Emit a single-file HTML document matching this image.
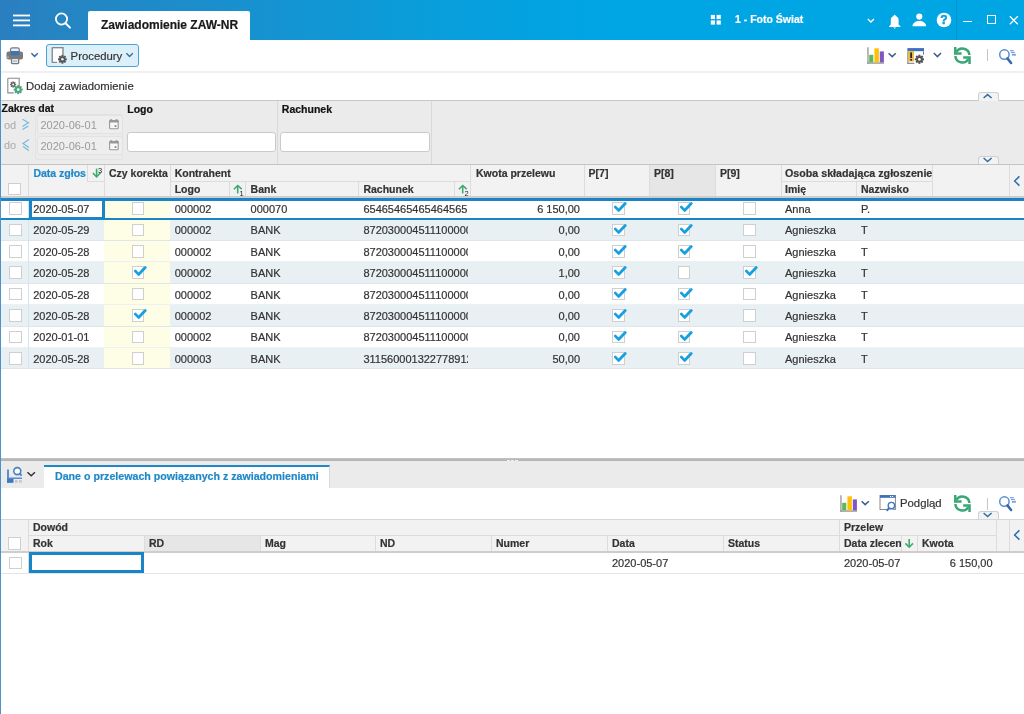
<!DOCTYPE html><html><head><meta charset="utf-8"><style>
html,body{margin:0;padding:0;width:1024px;height:714px;overflow:hidden;background:#fff;}
body{position:relative;font-family:"Liberation Sans",sans-serif;-webkit-font-smoothing:antialiased;}
div{position:absolute;box-sizing:border-box;}
.t{white-space:nowrap;-webkit-text-stroke:0.2px currentColor;}
#root{position:absolute;left:0;top:0;width:1024px;height:714px;overflow:hidden;will-change:transform;}
</style></head><body><div id="root">
<div style="left:0px;top:0px;width:1024px;height:40px;background:linear-gradient(to right,#2A7FC0 0px,#2783C1 44px,#1B8ECC 200px,#0B9CD9 400px,#00A5E4 600px,#00A5E4 1024px);"></div>
<svg style="position:absolute;left:12px;top:13px;" width="20" height="15" viewBox="0 0 20 15"><rect x="1" y="1.6" width="17" height="1.8" fill="#fff"/><rect x="1" y="6.5" width="17" height="1.8" fill="#fff"/><rect x="1" y="11.5" width="17" height="1.8" fill="#fff"/></svg>
<svg style="position:absolute;left:52px;top:10px;" width="22" height="22" viewBox="0 0 22 22"><circle cx="9.5" cy="9" r="5.6" fill="none" stroke="#fff" stroke-width="1.8"/><line x1="13.6" y1="13.2" x2="18" y2="17.6" stroke="#fff" stroke-width="2" stroke-linecap="round"/></svg>
<div style="left:88px;top:11px;width:162px;height:29px;background:#fff;border-radius:2px 2px 0 0;"></div>
<div class="t" style="left:101px;top:19px;font-size:12px;line-height:12px;font-weight:bold;color:#1a1a1a;">Zawiadomienie ZAW-NR</div>
<svg style="position:absolute;left:710px;top:14px;" width="13" height="12" viewBox="0 0 13 12"><rect x="0.8" y="0.9" width="4.2" height="4.2" fill="#fff"/><rect x="6.6" y="0.9" width="4.2" height="4.2" fill="#fff"/><rect x="0.8" y="6.4" width="4.2" height="4.2" fill="#fff"/><rect x="6.6" y="6.4" width="4.2" height="4.2" fill="#fff"/></svg>
<div class="t" style="left:735px;top:14px;font-size:10.5px;line-height:10.5px;font-weight:bold;color:#fff;">1 - Foto Świat</div>
<svg style="position:absolute;left:866px;top:17px;" width="10" height="8" viewBox="0 0 10 8"><polyline points="1.8,2 4.9,5 8,2" fill="none" stroke="#fff" stroke-width="1.4"/></svg>
<svg style="position:absolute;left:887px;top:13px;" width="16" height="17" viewBox="0 0 16 17"><path d="M7.7 1.6C8.3 2.4 8.9 2.8 9.3 3.2C10.9 3.9 11.6 5.2 11.6 6.8V11.6L13.5 13.4V13.9H1.9V13.4L3.8 11.6V6.8C3.8 5.2 4.5 3.9 6.1 3.2C6.5 2.8 7.1 2.4 7.7 1.6Z" fill="#fff"/><path d="M6.2 14.5H9.2L7.7 15.8Z" fill="#fff"/></svg>
<svg style="position:absolute;left:911px;top:12px;" width="17" height="16" viewBox="0 0 17 16"><circle cx="8.3" cy="4.6" r="3.1" fill="#fff"/><path d="M1.5 14.3c0-3.3 3-5.3 6.8-5.3s6.8 2 6.8 5.3z" fill="#fff"/></svg>
<svg style="position:absolute;left:935px;top:11px;" width="18" height="18" viewBox="0 0 18 18"><circle cx="9" cy="9" r="7.3" fill="#fff"/><text x="9" y="13.3" font-family="Liberation Sans" font-weight="bold" font-size="12" text-anchor="middle" fill="#06A0DE" stroke="#06A0DE" stroke-width="0.5">?</text></svg>
<div style="left:956px;top:0px;width:1px;height:40px;background:#0790C9;"></div>
<div style="left:963px;top:21.2px;width:8.6px;height:1.2px;background:#fff;"></div>
<div style="left:987px;top:15px;width:8.5px;height:8.5px;border:1.3px solid #fff;"></div>
<svg style="position:absolute;left:1008px;top:14px;" width="12" height="12" viewBox="0 0 12 12"><path d="M1.8 2.2L9.8 10.2M9.8 2.2L1.8 10.2" stroke="#fff" stroke-width="1.3"/></svg>
<div style="left:0px;top:40px;width:1px;height:674px;background:#4A92C9;"></div>
<svg style="position:absolute;left:5px;top:46px;" width="20" height="19" viewBox="0 0 20 19"><rect x="1.5" y="5.4" width="16.5" height="8.2" rx="2" fill="#7a7a7a"/>
<rect x="5.5" y="1.8" width="8.8" height="7.6" rx="1.8" fill="#e9eef5" stroke="#7a7a7a" stroke-width="1.2"/>
<rect x="5.6" y="5" width="8.6" height="4.2" fill="#3E73B9"/>
<rect x="2.4" y="10.6" width="1.2" height="1.2" fill="#ddd"/>
<rect x="6.5" y="12.4" width="7.2" height="5.2" rx="0.8" fill="#e3eaf4" stroke="#7a7a7a" stroke-width="1.3"/>
<rect x="8" y="14.2" width="4.2" height="1.6" fill="#a9c0e0"/></svg>
<svg style="position:absolute;left:30px;top:51px;" width="10" height="8" viewBox="0 0 10 8"><polyline points="1.4,2.2 4.6,5.4 7.8,2.2" fill="none" stroke="#3B6BA5" stroke-width="1.5"/></svg>
<div style="left:46px;top:44px;width:93px;height:23px;background:#DCF0FA;border:1px solid #4AA3D5;border-radius:3px;"></div>
<svg style="position:absolute;left:50px;top:46px;" width="20" height="20" viewBox="0 0 20 20"><path d="M2.3 1.6h10.6v8.2M7 16.4H2.3V1.6" fill="none" stroke="#888" stroke-width="1.1"/>
<rect x="2.3" y="1.6" width="10.6" height="14.8" fill="#fff" opacity="0"/></svg>
<svg style="position:absolute;left:52px;top:48px" width="11" height="14"><rect x="0.6" y="0.4" width="10" height="13.6" fill="#fff"/></svg>
<svg style="position:absolute;left:50px;top:46px;" width="20" height="20" viewBox="0 0 20 20"><path d="M2.3 1.6h10.6v8.2M7 16.4H2.3V1.6" fill="none" stroke="#8a8a8a" stroke-width="1.1"/></svg>
<svg style="position:absolute;left:55px;top:52px;" width="15" height="15" viewBox="0 0 15 15"><g transform="translate(7.4,7.3)"><path d="" /><circle r="3.168" fill="#555"/><rect x="-0.9680000000000001" y="-4.4" width="1.9360000000000002" height="8.8" fill="#555" transform="rotate(0)"/><rect x="-0.9680000000000001" y="-4.4" width="1.9360000000000002" height="8.8" fill="#555" transform="rotate(45)"/><rect x="-0.9680000000000001" y="-4.4" width="1.9360000000000002" height="8.8" fill="#555" transform="rotate(90)"/><rect x="-0.9680000000000001" y="-4.4" width="1.9360000000000002" height="8.8" fill="#555" transform="rotate(135)"/><circle r="1.32" fill="#DCF0FA"/></g></svg>
<div class="t" style="left:70.6px;top:51px;font-size:11.33px;line-height:11.33px;font-weight:normal;color:#333;">Procedury</div>
<svg style="position:absolute;left:125px;top:51px;" width="10" height="8" viewBox="0 0 10 8"><polyline points="1.4,2.2 4.6,5.4 7.8,2.2" fill="none" stroke="#3B6BA5" stroke-width="1.4"/></svg>
<svg style="position:absolute;left:867px;top:47px;" width="18" height="17" viewBox="0 0 18 17"><rect x="0.2" y="0.3" width="1.5" height="16.4" fill="#A3A3A3"/><rect x="0.2" y="15.4" width="16.9" height="1.3" fill="#8f8f8f"/><rect x="2.2" y="7.8" width="4.1" height="7.6" fill="#5CB85C"/><rect x="7.4" y="1.3" width="4.5" height="14.1" fill="#FFC107"/><rect x="12.8" y="4.4" width="4.1" height="11" fill="#7E57C2"/></svg>
<svg style="position:absolute;left:886px;top:51px;" width="12" height="8" viewBox="0 0 12 8"><polyline points="2.6,2.2 6.2,5.6 9.8,2.2" fill="none" stroke="#3E5F8A" stroke-width="1.5"/></svg>
<svg style="position:absolute;left:907px;top:48px;" width="18" height="17" viewBox="0 0 18 17"><rect x="0.4" y="0.1" width="16.6" height="3.4" fill="#3B6FBF"/>
<rect x="0.4" y="3.4" width="16.6" height="12.4" fill="#fff"/>
<rect x="0.4" y="3.4" width="1" height="12.4" fill="#777"/><rect x="0.4" y="14.8" width="7" height="1" fill="#777"/><rect x="16" y="3.4" width="1" height="3.2" fill="#777"/>
<rect x="1" y="2.9" width="6" height="10.7" fill="#E8B94F"/>
<rect x="3.3" y="4.4" width="1.6" height="5.6" fill="#1a1a1a"/><rect x="3.3" y="11" width="1.6" height="1.6" fill="#1a1a1a"/></svg>
<svg style="position:absolute;left:905px;top:45px;" width="20" height="20" viewBox="0 0 20 20"><g transform="translate(14.4,14.3)"><path d="" /><circle r="3.312" fill="#555"/><rect x="-1.012" y="-4.6" width="2.024" height="9.2" fill="#555" transform="rotate(0)"/><rect x="-1.012" y="-4.6" width="2.024" height="9.2" fill="#555" transform="rotate(45)"/><rect x="-1.012" y="-4.6" width="2.024" height="9.2" fill="#555" transform="rotate(90)"/><rect x="-1.012" y="-4.6" width="2.024" height="9.2" fill="#555" transform="rotate(135)"/><circle r="1.38" fill="#fff"/></g></svg>
<svg style="position:absolute;left:931px;top:51px;" width="12" height="8" viewBox="0 0 12 8"><polyline points="2.8,2 6.4,5.6 10,2" fill="none" stroke="#3E5F8A" stroke-width="1.5"/></svg>
<svg style="position:absolute;left:950px;top:44px;" width="26" height="22" viewBox="0 0 26 22"><path d="M19.4 11 A7 7 0 0 0 6.4 7.9" fill="none" stroke="#3BA676" stroke-width="2.5"/><polygon points="4,3.1 6.5,3.1 6.5,8.3 11.6,8.3 11.6,10.8 4,10.8" fill="#3BA676"/><g transform="rotate(180 12.4 11.5)"><path d="M19.4 11 A7 7 0 0 0 6.4 7.9" fill="none" stroke="#3BA676" stroke-width="2.5"/><polygon points="4,3.1 6.5,3.1 6.5,8.3 11.6,8.3 11.6,10.8 4,10.8" fill="#3BA676"/></g></svg>
<div style="left:987px;top:49px;width:1px;height:12px;background:#C6C6C6;"></div>
<svg style="position:absolute;left:998px;top:48px;" width="19" height="17" viewBox="0 0 19 17"><circle cx="6.4" cy="6.55" r="4.7" fill="none" stroke="#5B8BD0" stroke-width="1.5"/>
<line x1="9.4" y1="10.4" x2="13.1" y2="15" stroke="#3566B0" stroke-width="2.5" stroke-linecap="round"/>
<rect x="12" y="2.1" width="3.8" height="1.2" fill="#7AA3DC"/><rect x="12.9" y="3.9" width="4" height="1.2" fill="#7AA3DC"/><rect x="13.9" y="5.9" width="4" height="1.8" fill="#7AA3DC"/></svg>
<div style="left:1px;top:71px;width:1023px;height:2px;background:#EFEFEF;"></div>
<svg style="position:absolute;left:6px;top:77px" width="18" height="18"><path d="M1.8 1.2h11.4v8.6M7.8 15.9H1.8V1.2" fill="none" stroke="#8a8a8a" stroke-width="1.1"/><rect x="2.4" y="1.8" width="10.2" height="13.5" fill="#fff" opacity="0"/><g transform="translate(7.1,7.5)"><path d="" /><circle r="2.2319999999999998" fill="#666"/><rect x="-0.682" y="-3.1" width="1.364" height="6.2" fill="#666" transform="rotate(0)"/><rect x="-0.682" y="-3.1" width="1.364" height="6.2" fill="#666" transform="rotate(45)"/><rect x="-0.682" y="-3.1" width="1.364" height="6.2" fill="#666" transform="rotate(90)"/><rect x="-0.682" y="-3.1" width="1.364" height="6.2" fill="#666" transform="rotate(135)"/><circle r="0.9299999999999999" fill="#fff"/></g><g transform="translate(12.2,12.6)"><path d="" /><circle r="3.2399999999999998" fill="#4DA579"/><rect x="-0.99" y="-4.5" width="1.98" height="9.0" fill="#4DA579" transform="rotate(0)"/><rect x="-0.99" y="-4.5" width="1.98" height="9.0" fill="#4DA579" transform="rotate(45)"/><rect x="-0.99" y="-4.5" width="1.98" height="9.0" fill="#4DA579" transform="rotate(90)"/><rect x="-0.99" y="-4.5" width="1.98" height="9.0" fill="#4DA579" transform="rotate(135)"/><circle r="1.3499999999999999" fill="#fff"/></g></svg>
<div class="t" style="left:26px;top:81px;font-size:11.33px;line-height:11.33px;font-weight:normal;color:#333;">Dodaj zawiadomienie</div>
<div style="left:1px;top:100px;width:1023px;height:65px;background:#EBEBEB;border-top:1px solid #C9C8C6;border-bottom:1px solid #C4C4C4;"></div>
<div style="left:978px;top:92px;width:21px;height:9px;background:#F3F3F3;border:1.2px solid #CFCFCF;border-bottom:none;border-radius:3px 3px 0 0;"></div>
<svg style="position:absolute;left:982px;top:92px;" width="12" height="8" viewBox="0 0 12 8"><polyline points="1.6,6 5.6,2.6 9.6,6" fill="none" stroke="#2E6FAA" stroke-width="1.5"/></svg>
<div class="t" style="left:1.5px;top:103px;font-size:10.5px;line-height:10.5px;font-weight:bold;color:#111;">Zakres dat</div>
<div class="t" style="left:4px;top:120px;font-size:11px;line-height:11px;font-weight:normal;color:#AAA;-webkit-text-stroke:0;">od</div>
<div class="t" style="left:4px;top:140px;font-size:11px;line-height:11px;font-weight:normal;color:#AAA;-webkit-text-stroke:0;">do</div>
<svg style="position:absolute;left:20px;top:116px;" width="12" height="38" viewBox="0 0 12 38"><g fill="none" stroke="#74B9E2" stroke-width="1.2"><polyline points="2.5,3.3 8.4,6.8 2.5,10.4"/><line x1="2.5" y1="13.6" x2="8.4" y2="10"/><polyline points="8.9,23.6 3,27.4 8.9,31.5"/><line x1="3" y1="30.4" x2="8.9" y2="34.5"/></g></svg>
<div style="left:35px;top:114px;width:88px;height:46px;border:1px solid #E3E3E3;border-radius:2px;"></div>
<div style="left:36.5px;top:115px;width:86px;height:19px;background:#EEEEEE;border:1px solid #E2E2E2;border-radius:3px;"></div>
<div class="t" style="left:40.5px;top:120px;font-size:11px;line-height:11px;font-weight:normal;color:#9A9A9A;-webkit-text-stroke:0;">2020-06-01</div>
<svg style="position:absolute;left:108px;top:119px;" width="12" height="11" viewBox="0 0 12 11"><rect x="1.6" y="1.5" width="8.6" height="8.2" rx="1" fill="#F8F8F8" stroke="#999" stroke-width="1.1"/><rect x="1.1" y="1" width="9.6" height="2.6" rx="1" fill="#999"/><rect x="2.2" y="0.2" width="2" height="1.2" fill="#999"/><rect x="7.6" y="0.2" width="2" height="1.2" fill="#999"/><rect x="6.6" y="6.2" width="1.8" height="1.8" fill="#888"/></svg>
<div style="left:36.5px;top:136px;width:86px;height:19px;background:#EEEEEE;border:1px solid #E2E2E2;border-radius:3px;"></div>
<div class="t" style="left:40.5px;top:141px;font-size:11px;line-height:11px;font-weight:normal;color:#9A9A9A;-webkit-text-stroke:0;">2020-06-01</div>
<svg style="position:absolute;left:108px;top:140px;" width="12" height="11" viewBox="0 0 12 11"><rect x="1.6" y="1.5" width="8.6" height="8.2" rx="1" fill="#F8F8F8" stroke="#999" stroke-width="1.1"/><rect x="1.1" y="1" width="9.6" height="2.6" rx="1" fill="#999"/><rect x="2.2" y="0.2" width="2" height="1.2" fill="#999"/><rect x="7.6" y="0.2" width="2" height="1.2" fill="#999"/><rect x="6.6" y="6.2" width="1.8" height="1.8" fill="#888"/></svg>
<div class="t" style="left:127.3px;top:104px;font-size:10.5px;line-height:10.5px;font-weight:bold;color:#111;">Logo</div>
<div style="left:126.5px;top:132px;width:149px;height:20px;background:#fff;border:1px solid #CACACA;border-radius:3px;"></div>
<div style="left:277px;top:101px;width:1px;height:63px;background:#D9D9D9;"></div>
<div class="t" style="left:281.8px;top:104px;font-size:10.5px;line-height:10.5px;font-weight:bold;color:#111;">Rachunek</div>
<div style="left:280px;top:132px;width:150px;height:20px;background:#fff;border:1px solid #CACACA;border-radius:3px;"></div>
<div style="left:431px;top:101px;width:1px;height:63px;background:#D9D9D9;"></div>
<div style="left:978px;top:156px;width:21px;height:8px;background:#F3F3F3;border:1.2px solid #CFCFCF;border-bottom:none;border-radius:3px 3px 0 0;"></div>
<svg style="position:absolute;left:982px;top:156px;" width="12" height="8" viewBox="0 0 12 8"><polyline points="1.6,2 5.6,5.6 9.6,2" fill="none" stroke="#2E6FAA" stroke-width="1.5"/></svg>
<div style="left:1px;top:165px;width:1023px;height:33px;background:#F2F2F2;border-bottom:2px solid #CFCCCA;"></div>
<div style="left:28px;top:165px;width:1px;height:31px;background:#DCDCDC;"></div>
<div style="left:104px;top:165px;width:1px;height:31px;background:#DCDCDC;"></div>
<div style="left:170px;top:165px;width:1px;height:31px;background:#DCDCDC;"></div>
<div style="left:470px;top:165px;width:1px;height:31px;background:#DCDCDC;"></div>
<div style="left:584px;top:165px;width:1px;height:31px;background:#DCDCDC;"></div>
<div style="left:649px;top:165px;width:1px;height:31px;background:#DCDCDC;"></div>
<div style="left:715px;top:165px;width:1px;height:31px;background:#DCDCDC;"></div>
<div style="left:781px;top:165px;width:1px;height:31px;background:#DCDCDC;"></div>
<div style="left:932px;top:165px;width:1px;height:31px;background:#DCDCDC;"></div>
<div style="left:1009px;top:165px;width:1px;height:31px;background:#DCDCDC;"></div>
<div style="left:245px;top:181px;width:1px;height:15px;background:#DCDCDC;"></div>
<div style="left:358px;top:181px;width:1px;height:15px;background:#DCDCDC;"></div>
<div style="left:856px;top:181px;width:1px;height:15px;background:#DCDCDC;"></div>
<div style="left:170px;top:181px;width:300px;height:1px;background:#DCDCDC;"></div>
<div style="left:781px;top:181px;width:151px;height:1px;background:#DCDCDC;"></div>
<div style="left:650px;top:165px;width:65px;height:31px;background:#E6E6E6;"></div>
<div style="left:87px;top:165px;width:1px;height:16px;background:#DCDCDC;"></div>
<div style="left:87px;top:181px;width:17px;height:1px;background:#DCDCDC;"></div>
<div style="left:229px;top:181px;width:1px;height:15px;background:#DCDCDC;"></div>
<div style="left:454px;top:181px;width:1px;height:15px;background:#DCDCDC;"></div>
<div style="left:8px;top:182.5px;width:12.5px;height:12.5px;background:#fff;border:1px solid #CFCFCF;"></div>
<div class="t" style="left:33.4px;top:168px;font-size:10.5px;line-height:10.5px;font-weight:bold;color:#1E88C8;">Data zgłos</div>
<svg style="position:absolute;left:88px;top:166px;" width="16" height="14" viewBox="0 0 16 14"><line x1="8.6" y1="2.6" x2="8.6" y2="10.6" stroke="#3DAA6E" stroke-width="1.6"/><polyline points="4.9,7 8.6,10.8 12.6,6.8" fill="none" stroke="#3DAA6E" stroke-width="1.6"/><text x="10" y="6.8" font-family="Liberation Sans" font-size="7.5" fill="#222">3</text></svg>
<div class="t" style="left:109px;top:168px;font-size:10.5px;line-height:10.5px;font-weight:bold;color:#333;">Czy korekta</div>
<div class="t" style="left:174.7px;top:168px;font-size:10.5px;line-height:10.5px;font-weight:bold;color:#333;">Kontrahent</div>
<div class="t" style="left:174.7px;top:184px;font-size:10.5px;line-height:10.5px;font-weight:bold;color:#333;">Logo</div>
<svg style="position:absolute;left:229px;top:182px;" width="16" height="15" viewBox="0 0 16 15"><line x1="8.7" y1="3.6" x2="8.7" y2="11.4" stroke="#3DAA6E" stroke-width="1.6"/><polyline points="4.9,7.2 8.7,3.5 12.7,7.2" fill="none" stroke="#3DAA6E" stroke-width="1.6"/><text x="10.4" y="14" font-family="Liberation Sans" font-size="7.5" fill="#222">1</text></svg>
<div class="t" style="left:250.6px;top:184px;font-size:10.5px;line-height:10.5px;font-weight:bold;color:#333;">Bank</div>
<div class="t" style="left:363.4px;top:184px;font-size:10.5px;line-height:10.5px;font-weight:bold;color:#333;">Rachunek</div>
<svg style="position:absolute;left:454px;top:182px;" width="16" height="15" viewBox="0 0 16 15"><line x1="8.7" y1="3.6" x2="8.7" y2="11.4" stroke="#3DAA6E" stroke-width="1.6"/><polyline points="4.9,7.2 8.7,3.5 12.7,7.2" fill="none" stroke="#3DAA6E" stroke-width="1.6"/><text x="10.4" y="14" font-family="Liberation Sans" font-size="7.5" fill="#222">2</text></svg>
<div class="t" style="left:476px;top:168px;font-size:10.5px;line-height:10.5px;font-weight:bold;color:#333;">Kwota przelewu</div>
<div class="t" style="left:588.6px;top:168px;font-size:10.5px;line-height:10.5px;font-weight:bold;color:#333;">P[7]</div>
<div class="t" style="left:654px;top:168px;font-size:10.5px;line-height:10.5px;font-weight:bold;color:#333;">P[8]</div>
<div class="t" style="left:720px;top:168px;font-size:10.5px;line-height:10.5px;font-weight:bold;color:#333;">P[9]</div>
<div class="t" style="left:785px;top:168px;font-size:10.7px;line-height:10.7px;font-weight:bold;color:#333;">Osoba składająca zgłoszenie</div>
<div class="t" style="left:785px;top:184px;font-size:10.5px;line-height:10.5px;font-weight:bold;color:#333;">Imię</div>
<div class="t" style="left:861px;top:184px;font-size:10.5px;line-height:10.5px;font-weight:bold;color:#333;">Nazwisko</div>
<svg style="position:absolute;left:1011px;top:174px;" width="12" height="14" viewBox="0 0 12 14"><polyline points="8.4,2.4 3.6,7 8.4,11.6" fill="none" stroke="#2E6FAA" stroke-width="1.5"/></svg>
<div style="left:1px;top:198.0px;width:1023px;height:21.43px;background:#fff;border-bottom:1px solid #EDF1F4;"></div>
<div style="left:104px;top:198.0px;width:66px;height:20.43px;background:#FEFEE6;"></div>
<div style="left:28px;top:198.0px;width:1px;height:21.43px;background:#D6E4F0;"></div>
<div style="left:9px;top:202.2px;width:12.5px;height:12.5px;background:#fff;border:1px solid #CFCFCF;"></div>
<div class="t" style="left:33.2px;top:204px;font-size:11px;line-height:11px;font-weight:normal;color:#333;">2020-05-07</div>
<div style="left:131.5px;top:202.2px;width:12.5px;height:12.5px;background:#fff;border:1px solid #CFCFCF;"></div>
<div class="t" style="left:174.7px;top:204px;font-size:11px;line-height:11px;font-weight:normal;color:#333;">000002</div>
<div class="t" style="left:250.6px;top:204px;font-size:11px;line-height:11px;font-weight:normal;color:#333;">000070</div>
<div class="t" style="left:363.4px;top:204px;width:104.3px;overflow:hidden;font-size:11px;line-height:11px;font-weight:normal;color:#333;">654654654654645656</div>
<div class="t" style="left:280px;width:300px;text-align:right;top:204px;font-size:11px;line-height:11px;font-weight:normal;color:#333;">6 150,00</div>
<div style="left:612px;top:202.2px;width:12.5px;height:12.5px;background:#fff;border:1px solid #CFCFCF;"></div>
<svg style="position:absolute;left:613px;top:200.2px;" width="14" height="13" viewBox="0 0 14 13"><polyline points="2.4,7.1 5.6,10.4 12.2,3.6" fill="none" stroke="#16A0E0" stroke-width="2.8" stroke-linecap="round" stroke-linejoin="round"/></svg>
<div style="left:677.5px;top:202.2px;width:12.5px;height:12.5px;background:#fff;border:1px solid #CFCFCF;"></div>
<svg style="position:absolute;left:678.5px;top:200.2px;" width="14" height="13" viewBox="0 0 14 13"><polyline points="2.4,7.1 5.6,10.4 12.2,3.6" fill="none" stroke="#16A0E0" stroke-width="2.8" stroke-linecap="round" stroke-linejoin="round"/></svg>
<div style="left:743px;top:202.2px;width:12.5px;height:12.5px;background:#fff;border:1px solid #CFCFCF;"></div>
<div class="t" style="left:785px;top:204px;font-size:11px;line-height:11px;font-weight:normal;color:#333;">Anna</div>
<div class="t" style="left:861px;top:204px;font-size:11px;line-height:11px;font-weight:normal;color:#333;">P.</div>
<div style="left:1px;top:219.43px;width:1023px;height:21.43px;background:#E9F0F4;border-bottom:1px solid #DFE6EB;"></div>
<div style="left:104px;top:219.43px;width:66px;height:20.43px;background:#FEFEE6;"></div>
<div style="left:28px;top:219.43px;width:1px;height:21.43px;background:#D6E4F0;"></div>
<div style="left:9px;top:223.63px;width:12.5px;height:12.5px;background:#fff;border:1px solid #CFCFCF;"></div>
<div class="t" style="left:33.2px;top:225px;font-size:11px;line-height:11px;font-weight:normal;color:#333;">2020-05-29</div>
<div style="left:131.5px;top:223.63px;width:12.5px;height:12.5px;background:#fff;border:1px solid #CFCFCF;"></div>
<div class="t" style="left:174.7px;top:225px;font-size:11px;line-height:11px;font-weight:normal;color:#333;">000002</div>
<div class="t" style="left:250.6px;top:225px;font-size:11px;line-height:11px;font-weight:normal;color:#333;">BANK</div>
<div class="t" style="left:363.4px;top:225px;width:104.3px;overflow:hidden;font-size:11px;line-height:11px;font-weight:normal;color:#333;">872030004511100000</div>
<div class="t" style="left:280px;width:300px;text-align:right;top:225px;font-size:11px;line-height:11px;font-weight:normal;color:#333;">0,00</div>
<div style="left:612px;top:223.63px;width:12.5px;height:12.5px;background:#fff;border:1px solid #CFCFCF;"></div>
<svg style="position:absolute;left:613px;top:221.63px;" width="14" height="13" viewBox="0 0 14 13"><polyline points="2.4,7.1 5.6,10.4 12.2,3.6" fill="none" stroke="#16A0E0" stroke-width="2.8" stroke-linecap="round" stroke-linejoin="round"/></svg>
<div style="left:677.5px;top:223.63px;width:12.5px;height:12.5px;background:#fff;border:1px solid #CFCFCF;"></div>
<svg style="position:absolute;left:678.5px;top:221.63px;" width="14" height="13" viewBox="0 0 14 13"><polyline points="2.4,7.1 5.6,10.4 12.2,3.6" fill="none" stroke="#16A0E0" stroke-width="2.8" stroke-linecap="round" stroke-linejoin="round"/></svg>
<div style="left:743px;top:223.63px;width:12.5px;height:12.5px;background:#fff;border:1px solid #CFCFCF;"></div>
<div class="t" style="left:785px;top:225px;font-size:11px;line-height:11px;font-weight:normal;color:#333;">Agnieszka</div>
<div class="t" style="left:861px;top:225px;font-size:11px;line-height:11px;font-weight:normal;color:#333;">T</div>
<div style="left:1px;top:240.86px;width:1023px;height:21.43px;background:#fff;border-bottom:1px solid #EDF1F4;"></div>
<div style="left:104px;top:240.86px;width:66px;height:20.43px;background:#FEFEE6;"></div>
<div style="left:28px;top:240.86px;width:1px;height:21.43px;background:#D6E4F0;"></div>
<div style="left:9px;top:245.06px;width:12.5px;height:12.5px;background:#fff;border:1px solid #CFCFCF;"></div>
<div class="t" style="left:33.2px;top:247px;font-size:11px;line-height:11px;font-weight:normal;color:#333;">2020-05-28</div>
<div style="left:131.5px;top:245.06px;width:12.5px;height:12.5px;background:#fff;border:1px solid #CFCFCF;"></div>
<div class="t" style="left:174.7px;top:247px;font-size:11px;line-height:11px;font-weight:normal;color:#333;">000002</div>
<div class="t" style="left:250.6px;top:247px;font-size:11px;line-height:11px;font-weight:normal;color:#333;">BANK</div>
<div class="t" style="left:363.4px;top:247px;width:104.3px;overflow:hidden;font-size:11px;line-height:11px;font-weight:normal;color:#333;">872030004511100000</div>
<div class="t" style="left:280px;width:300px;text-align:right;top:247px;font-size:11px;line-height:11px;font-weight:normal;color:#333;">0,00</div>
<div style="left:612px;top:245.06px;width:12.5px;height:12.5px;background:#fff;border:1px solid #CFCFCF;"></div>
<svg style="position:absolute;left:613px;top:243.06px;" width="14" height="13" viewBox="0 0 14 13"><polyline points="2.4,7.1 5.6,10.4 12.2,3.6" fill="none" stroke="#16A0E0" stroke-width="2.8" stroke-linecap="round" stroke-linejoin="round"/></svg>
<div style="left:677.5px;top:245.06px;width:12.5px;height:12.5px;background:#fff;border:1px solid #CFCFCF;"></div>
<svg style="position:absolute;left:678.5px;top:243.06px;" width="14" height="13" viewBox="0 0 14 13"><polyline points="2.4,7.1 5.6,10.4 12.2,3.6" fill="none" stroke="#16A0E0" stroke-width="2.8" stroke-linecap="round" stroke-linejoin="round"/></svg>
<div style="left:743px;top:245.06px;width:12.5px;height:12.5px;background:#fff;border:1px solid #CFCFCF;"></div>
<div class="t" style="left:785px;top:247px;font-size:11px;line-height:11px;font-weight:normal;color:#333;">Agnieszka</div>
<div class="t" style="left:861px;top:247px;font-size:11px;line-height:11px;font-weight:normal;color:#333;">T</div>
<div style="left:1px;top:262.29px;width:1023px;height:21.43px;background:#E9F0F4;border-bottom:1px solid #DFE6EB;"></div>
<div style="left:104px;top:262.29px;width:66px;height:20.43px;background:#FEFEE6;"></div>
<div style="left:28px;top:262.29px;width:1px;height:21.43px;background:#D6E4F0;"></div>
<div style="left:9px;top:266.48999999999995px;width:12.5px;height:12.5px;background:#fff;border:1px solid #CFCFCF;"></div>
<div class="t" style="left:33.2px;top:268px;font-size:11px;line-height:11px;font-weight:normal;color:#333;">2020-05-28</div>
<div style="left:131.5px;top:266.48999999999995px;width:12.5px;height:12.5px;background:#fff;border:1px solid #CFCFCF;"></div>
<svg style="position:absolute;left:132.5px;top:264.48999999999995px;" width="14" height="13" viewBox="0 0 14 13"><polyline points="2.4,7.1 5.6,10.4 12.2,3.6" fill="none" stroke="#16A0E0" stroke-width="2.8" stroke-linecap="round" stroke-linejoin="round"/></svg>
<div class="t" style="left:174.7px;top:268px;font-size:11px;line-height:11px;font-weight:normal;color:#333;">000002</div>
<div class="t" style="left:250.6px;top:268px;font-size:11px;line-height:11px;font-weight:normal;color:#333;">BANK</div>
<div class="t" style="left:363.4px;top:268px;width:104.3px;overflow:hidden;font-size:11px;line-height:11px;font-weight:normal;color:#333;">872030004511100000</div>
<div class="t" style="left:280px;width:300px;text-align:right;top:268px;font-size:11px;line-height:11px;font-weight:normal;color:#333;">1,00</div>
<div style="left:612px;top:266.48999999999995px;width:12.5px;height:12.5px;background:#fff;border:1px solid #CFCFCF;"></div>
<svg style="position:absolute;left:613px;top:264.48999999999995px;" width="14" height="13" viewBox="0 0 14 13"><polyline points="2.4,7.1 5.6,10.4 12.2,3.6" fill="none" stroke="#16A0E0" stroke-width="2.8" stroke-linecap="round" stroke-linejoin="round"/></svg>
<div style="left:677.5px;top:266.48999999999995px;width:12.5px;height:12.5px;background:#fff;border:1px solid #CFCFCF;"></div>
<div style="left:743px;top:266.48999999999995px;width:12.5px;height:12.5px;background:#fff;border:1px solid #CFCFCF;"></div>
<svg style="position:absolute;left:744px;top:264.48999999999995px;" width="14" height="13" viewBox="0 0 14 13"><polyline points="2.4,7.1 5.6,10.4 12.2,3.6" fill="none" stroke="#16A0E0" stroke-width="2.8" stroke-linecap="round" stroke-linejoin="round"/></svg>
<div class="t" style="left:785px;top:268px;font-size:11px;line-height:11px;font-weight:normal;color:#333;">Agnieszka</div>
<div class="t" style="left:861px;top:268px;font-size:11px;line-height:11px;font-weight:normal;color:#333;">T</div>
<div style="left:1px;top:283.72px;width:1023px;height:21.43px;background:#fff;border-bottom:1px solid #EDF1F4;"></div>
<div style="left:104px;top:283.72px;width:66px;height:20.43px;background:#FEFEE6;"></div>
<div style="left:28px;top:283.72px;width:1px;height:21.43px;background:#D6E4F0;"></div>
<div style="left:9px;top:287.92px;width:12.5px;height:12.5px;background:#fff;border:1px solid #CFCFCF;"></div>
<div class="t" style="left:33.2px;top:290px;font-size:11px;line-height:11px;font-weight:normal;color:#333;">2020-05-28</div>
<div style="left:131.5px;top:287.92px;width:12.5px;height:12.5px;background:#fff;border:1px solid #CFCFCF;"></div>
<div class="t" style="left:174.7px;top:290px;font-size:11px;line-height:11px;font-weight:normal;color:#333;">000002</div>
<div class="t" style="left:250.6px;top:290px;font-size:11px;line-height:11px;font-weight:normal;color:#333;">BANK</div>
<div class="t" style="left:363.4px;top:290px;width:104.3px;overflow:hidden;font-size:11px;line-height:11px;font-weight:normal;color:#333;">872030004511100000</div>
<div class="t" style="left:280px;width:300px;text-align:right;top:290px;font-size:11px;line-height:11px;font-weight:normal;color:#333;">0,00</div>
<div style="left:612px;top:287.92px;width:12.5px;height:12.5px;background:#fff;border:1px solid #CFCFCF;"></div>
<svg style="position:absolute;left:613px;top:285.92px;" width="14" height="13" viewBox="0 0 14 13"><polyline points="2.4,7.1 5.6,10.4 12.2,3.6" fill="none" stroke="#16A0E0" stroke-width="2.8" stroke-linecap="round" stroke-linejoin="round"/></svg>
<div style="left:677.5px;top:287.92px;width:12.5px;height:12.5px;background:#fff;border:1px solid #CFCFCF;"></div>
<svg style="position:absolute;left:678.5px;top:285.92px;" width="14" height="13" viewBox="0 0 14 13"><polyline points="2.4,7.1 5.6,10.4 12.2,3.6" fill="none" stroke="#16A0E0" stroke-width="2.8" stroke-linecap="round" stroke-linejoin="round"/></svg>
<div style="left:743px;top:287.92px;width:12.5px;height:12.5px;background:#fff;border:1px solid #CFCFCF;"></div>
<div class="t" style="left:785px;top:290px;font-size:11px;line-height:11px;font-weight:normal;color:#333;">Agnieszka</div>
<div class="t" style="left:861px;top:290px;font-size:11px;line-height:11px;font-weight:normal;color:#333;">T</div>
<div style="left:1px;top:305.15px;width:1023px;height:21.43px;background:#E9F0F4;border-bottom:1px solid #DFE6EB;"></div>
<div style="left:104px;top:305.15px;width:66px;height:20.43px;background:#FEFEE6;"></div>
<div style="left:28px;top:305.15px;width:1px;height:21.43px;background:#D6E4F0;"></div>
<div style="left:9px;top:309.34999999999997px;width:12.5px;height:12.5px;background:#fff;border:1px solid #CFCFCF;"></div>
<div class="t" style="left:33.2px;top:311px;font-size:11px;line-height:11px;font-weight:normal;color:#333;">2020-05-28</div>
<div style="left:131.5px;top:309.34999999999997px;width:12.5px;height:12.5px;background:#fff;border:1px solid #CFCFCF;"></div>
<svg style="position:absolute;left:132.5px;top:307.34999999999997px;" width="14" height="13" viewBox="0 0 14 13"><polyline points="2.4,7.1 5.6,10.4 12.2,3.6" fill="none" stroke="#16A0E0" stroke-width="2.8" stroke-linecap="round" stroke-linejoin="round"/></svg>
<div class="t" style="left:174.7px;top:311px;font-size:11px;line-height:11px;font-weight:normal;color:#333;">000002</div>
<div class="t" style="left:250.6px;top:311px;font-size:11px;line-height:11px;font-weight:normal;color:#333;">BANK</div>
<div class="t" style="left:363.4px;top:311px;width:104.3px;overflow:hidden;font-size:11px;line-height:11px;font-weight:normal;color:#333;">872030004511100000</div>
<div class="t" style="left:280px;width:300px;text-align:right;top:311px;font-size:11px;line-height:11px;font-weight:normal;color:#333;">0,00</div>
<div style="left:612px;top:309.34999999999997px;width:12.5px;height:12.5px;background:#fff;border:1px solid #CFCFCF;"></div>
<svg style="position:absolute;left:613px;top:307.34999999999997px;" width="14" height="13" viewBox="0 0 14 13"><polyline points="2.4,7.1 5.6,10.4 12.2,3.6" fill="none" stroke="#16A0E0" stroke-width="2.8" stroke-linecap="round" stroke-linejoin="round"/></svg>
<div style="left:677.5px;top:309.34999999999997px;width:12.5px;height:12.5px;background:#fff;border:1px solid #CFCFCF;"></div>
<svg style="position:absolute;left:678.5px;top:307.34999999999997px;" width="14" height="13" viewBox="0 0 14 13"><polyline points="2.4,7.1 5.6,10.4 12.2,3.6" fill="none" stroke="#16A0E0" stroke-width="2.8" stroke-linecap="round" stroke-linejoin="round"/></svg>
<div style="left:743px;top:309.34999999999997px;width:12.5px;height:12.5px;background:#fff;border:1px solid #CFCFCF;"></div>
<div class="t" style="left:785px;top:311px;font-size:11px;line-height:11px;font-weight:normal;color:#333;">Agnieszka</div>
<div class="t" style="left:861px;top:311px;font-size:11px;line-height:11px;font-weight:normal;color:#333;">T</div>
<div style="left:1px;top:326.58px;width:1023px;height:21.43px;background:#fff;border-bottom:1px solid #EDF1F4;"></div>
<div style="left:104px;top:326.58px;width:66px;height:20.43px;background:#FEFEE6;"></div>
<div style="left:28px;top:326.58px;width:1px;height:21.43px;background:#D6E4F0;"></div>
<div style="left:9px;top:330.78px;width:12.5px;height:12.5px;background:#fff;border:1px solid #CFCFCF;"></div>
<div class="t" style="left:33.2px;top:332px;font-size:11px;line-height:11px;font-weight:normal;color:#333;">2020-01-01</div>
<div style="left:131.5px;top:330.78px;width:12.5px;height:12.5px;background:#fff;border:1px solid #CFCFCF;"></div>
<div class="t" style="left:174.7px;top:332px;font-size:11px;line-height:11px;font-weight:normal;color:#333;">000002</div>
<div class="t" style="left:250.6px;top:332px;font-size:11px;line-height:11px;font-weight:normal;color:#333;">BANK</div>
<div class="t" style="left:363.4px;top:332px;width:104.3px;overflow:hidden;font-size:11px;line-height:11px;font-weight:normal;color:#333;">872030004511100000</div>
<div class="t" style="left:280px;width:300px;text-align:right;top:332px;font-size:11px;line-height:11px;font-weight:normal;color:#333;">0,00</div>
<div style="left:612px;top:330.78px;width:12.5px;height:12.5px;background:#fff;border:1px solid #CFCFCF;"></div>
<svg style="position:absolute;left:613px;top:328.78px;" width="14" height="13" viewBox="0 0 14 13"><polyline points="2.4,7.1 5.6,10.4 12.2,3.6" fill="none" stroke="#16A0E0" stroke-width="2.8" stroke-linecap="round" stroke-linejoin="round"/></svg>
<div style="left:677.5px;top:330.78px;width:12.5px;height:12.5px;background:#fff;border:1px solid #CFCFCF;"></div>
<svg style="position:absolute;left:678.5px;top:328.78px;" width="14" height="13" viewBox="0 0 14 13"><polyline points="2.4,7.1 5.6,10.4 12.2,3.6" fill="none" stroke="#16A0E0" stroke-width="2.8" stroke-linecap="round" stroke-linejoin="round"/></svg>
<div style="left:743px;top:330.78px;width:12.5px;height:12.5px;background:#fff;border:1px solid #CFCFCF;"></div>
<div class="t" style="left:785px;top:332px;font-size:11px;line-height:11px;font-weight:normal;color:#333;">Agnieszka</div>
<div class="t" style="left:861px;top:332px;font-size:11px;line-height:11px;font-weight:normal;color:#333;">T</div>
<div style="left:1px;top:348.01px;width:1023px;height:21.43px;background:#E9F0F4;border-bottom:1px solid #DFE6EB;"></div>
<div style="left:104px;top:348.01px;width:66px;height:20.43px;background:#FEFEE6;"></div>
<div style="left:28px;top:348.01px;width:1px;height:21.43px;background:#D6E4F0;"></div>
<div style="left:9px;top:352.21px;width:12.5px;height:12.5px;background:#fff;border:1px solid #CFCFCF;"></div>
<div class="t" style="left:33.2px;top:354px;font-size:11px;line-height:11px;font-weight:normal;color:#333;">2020-05-28</div>
<div style="left:131.5px;top:352.21px;width:12.5px;height:12.5px;background:#fff;border:1px solid #CFCFCF;"></div>
<div class="t" style="left:174.7px;top:354px;font-size:11px;line-height:11px;font-weight:normal;color:#333;">000003</div>
<div class="t" style="left:250.6px;top:354px;font-size:11px;line-height:11px;font-weight:normal;color:#333;">BANK</div>
<div class="t" style="left:363.4px;top:354px;width:104.3px;overflow:hidden;font-size:11px;line-height:11px;font-weight:normal;color:#333;">311560001322778912</div>
<div class="t" style="left:280px;width:300px;text-align:right;top:354px;font-size:11px;line-height:11px;font-weight:normal;color:#333;">50,00</div>
<div style="left:612px;top:352.21px;width:12.5px;height:12.5px;background:#fff;border:1px solid #CFCFCF;"></div>
<svg style="position:absolute;left:613px;top:350.21px;" width="14" height="13" viewBox="0 0 14 13"><polyline points="2.4,7.1 5.6,10.4 12.2,3.6" fill="none" stroke="#16A0E0" stroke-width="2.8" stroke-linecap="round" stroke-linejoin="round"/></svg>
<div style="left:677.5px;top:352.21px;width:12.5px;height:12.5px;background:#fff;border:1px solid #CFCFCF;"></div>
<svg style="position:absolute;left:678.5px;top:350.21px;" width="14" height="13" viewBox="0 0 14 13"><polyline points="2.4,7.1 5.6,10.4 12.2,3.6" fill="none" stroke="#16A0E0" stroke-width="2.8" stroke-linecap="round" stroke-linejoin="round"/></svg>
<div style="left:743px;top:352.21px;width:12.5px;height:12.5px;background:#fff;border:1px solid #CFCFCF;"></div>
<div class="t" style="left:785px;top:354px;font-size:11px;line-height:11px;font-weight:normal;color:#333;">Agnieszka</div>
<div class="t" style="left:861px;top:354px;font-size:11px;line-height:11px;font-weight:normal;color:#333;">T</div>
<div style="left:1px;top:198px;width:1023px;height:2.5px;background:#1A85C6;"></div>
<div style="left:1px;top:217.6px;width:1023px;height:2.5px;background:#1A85C6;"></div>
<div style="left:28.5px;top:198px;width:76px;height:22px;border:3px solid #1A85C6;"></div>
<div style="left:1px;top:458px;width:1023px;height:4px;background:linear-gradient(#C4C4C4,#B3B3B3 55%,#BDBDBD);"></div>
<div style="left:507px;top:459.8px;width:3px;height:1.2px;background:#F0F0F0;"></div>
<div style="left:511px;top:459.8px;width:3px;height:1.2px;background:#F0F0F0;"></div>
<div style="left:515px;top:459.8px;width:3px;height:1.2px;background:#F0F0F0;"></div>
<div style="left:1px;top:461px;width:1023px;height:26.5px;background:#EBEBEB;"></div>
<svg style="position:absolute;left:6px;top:466px;" width="18" height="18" viewBox="0 0 18 18"><rect x="1.2" y="3.5" width="1.6" height="13.3" fill="#3D78C4"/><rect x="1.2" y="12.5" width="6.3" height="4.3" fill="#3D78C4"/><rect x="2.5" y="11.5" width="13.5" height="1.5" fill="#5A8CD0"/><circle cx="11.3" cy="5.1" r="3.5" fill="#fff" stroke="#4A80C8" stroke-width="1.6"/><line x1="13.8" y1="7.6" x2="15.6" y2="9.6" stroke="#4A80C8" stroke-width="2"/><rect x="9" y="14" width="2.6" height="2.8" fill="#C8C8C8"/><rect x="13" y="14" width="2.8" height="2.8" fill="#C8C8C8"/></svg>
<svg style="position:absolute;left:26px;top:470px;" width="11" height="9" viewBox="0 0 11 9"><polyline points="1.5,2.3 5.2,5.8 8.9,2.3" fill="none" stroke="#333" stroke-width="1.5"/></svg>
<div style="left:44px;top:464.8px;width:286px;height:23px;background:#fff;border-top:2px solid #1E88C8;border-right:1px solid #DADADA;"></div>
<div class="t" style="left:55px;top:471px;font-size:10.65px;line-height:10.65px;font-weight:bold;color:#1E88C8;">Dane o przelewach powiązanych z zawiadomieniami</div>
<svg style="position:absolute;left:840px;top:495px;" width="18" height="17" viewBox="0 0 18 17"><rect x="0.2" y="0.3" width="1.5" height="16.4" fill="#A3A3A3"/><rect x="0.2" y="15.4" width="16.9" height="1.3" fill="#8f8f8f"/><rect x="2.2" y="7.8" width="4.1" height="7.6" fill="#5CB85C"/><rect x="7.4" y="1.3" width="4.5" height="14.1" fill="#FFC107"/><rect x="12.8" y="4.4" width="4.1" height="11" fill="#7E57C2"/></svg>
<svg style="position:absolute;left:859px;top:499px;" width="12" height="8" viewBox="0 0 12 8"><polyline points="2.6,2.2 6.2,5.6 9.8,2.2" fill="none" stroke="#3E5F8A" stroke-width="1.5"/></svg>
<svg style="position:absolute;left:879px;top:494px;" width="20" height="18" viewBox="0 0 20 18"><rect x="1" y="1.5" width="15.4" height="14" fill="#fff" stroke="#8a8a8a" stroke-width="1"/>
<rect x="1" y="1.2" width="15.4" height="2.6" fill="#3B6FBF"/>
<rect x="11" y="2" width="1.2" height="1" fill="#fff"/><rect x="13" y="2" width="1.2" height="1" fill="#fff"/>
<circle cx="12" cy="12" r="4" fill="#fff"/><circle cx="12.4" cy="11.6" r="3.2" fill="none" stroke="#3C78C3" stroke-width="1.4"/>
<line x1="10.2" y1="14" x2="7.6" y2="16.8" stroke="#3C78C3" stroke-width="2"/></svg>
<div class="t" style="left:900px;top:498px;font-size:11.33px;line-height:11.33px;font-weight:normal;color:#333;">Podgląd</div>
<svg style="position:absolute;left:950px;top:492px;" width="26" height="22" viewBox="0 0 26 22"><path d="M19.4 11 A7 7 0 0 0 6.4 7.9" fill="none" stroke="#3BA676" stroke-width="2.5"/><polygon points="4,3.1 6.5,3.1 6.5,8.3 11.6,8.3 11.6,10.8 4,10.8" fill="#3BA676"/><g transform="rotate(180 12.4 11.5)"><path d="M19.4 11 A7 7 0 0 0 6.4 7.9" fill="none" stroke="#3BA676" stroke-width="2.5"/><polygon points="4,3.1 6.5,3.1 6.5,8.3 11.6,8.3 11.6,10.8 4,10.8" fill="#3BA676"/></g></svg>
<div style="left:987px;top:497.5px;width:1px;height:12px;background:#C6C6C6;"></div>
<svg style="position:absolute;left:998px;top:495px;" width="19" height="17" viewBox="0 0 19 17"><circle cx="6.4" cy="6.55" r="4.7" fill="none" stroke="#5B8BD0" stroke-width="1.5"/>
<line x1="9.4" y1="10.4" x2="13.1" y2="15" stroke="#3566B0" stroke-width="2.5" stroke-linecap="round"/>
<rect x="12" y="2.1" width="3.8" height="1.2" fill="#7AA3DC"/><rect x="12.9" y="3.9" width="4" height="1.2" fill="#7AA3DC"/><rect x="13.9" y="5.9" width="4" height="1.8" fill="#7AA3DC"/></svg>
<div style="left:978px;top:511px;width:21px;height:9px;background:#F3F3F3;border:1.2px solid #CFCFCF;border-bottom:none;border-radius:3px 3px 0 0;"></div>
<svg style="position:absolute;left:982px;top:511px;" width="12" height="8" viewBox="0 0 12 8"><polyline points="1.6,2 5.6,5.6 9.6,2" fill="none" stroke="#2E6FAA" stroke-width="1.5"/></svg>
<div style="left:1px;top:519px;width:1023px;height:34px;background:#F2F2F2;border-top:1px solid #D6D6D6;border-bottom:2px solid #CFCCCA;"></div>
<div style="left:145px;top:536px;width:115px;height:15px;background:#E6E6E6;"></div>
<div style="left:28px;top:520px;width:1px;height:31px;background:#DCDCDC;"></div>
<div style="left:839px;top:520px;width:1px;height:31px;background:#DCDCDC;"></div>
<div style="left:996px;top:520px;width:1px;height:31px;background:#DCDCDC;"></div>
<div style="left:1009px;top:520px;width:1px;height:31px;background:#DCDCDC;"></div>
<div style="left:144px;top:535px;width:1px;height:16px;background:#DCDCDC;"></div>
<div style="left:260px;top:535px;width:1px;height:16px;background:#DCDCDC;"></div>
<div style="left:375px;top:535px;width:1px;height:16px;background:#DCDCDC;"></div>
<div style="left:491px;top:535px;width:1px;height:16px;background:#DCDCDC;"></div>
<div style="left:607px;top:535px;width:1px;height:16px;background:#DCDCDC;"></div>
<div style="left:723px;top:535px;width:1px;height:16px;background:#DCDCDC;"></div>
<div style="left:917px;top:535px;width:1px;height:16px;background:#DCDCDC;"></div>
<div style="left:901px;top:535px;width:1px;height:16px;background:#DCDCDC;"></div>
<div style="left:28px;top:535px;width:968px;height:1px;background:#DCDCDC;"></div>
<div style="left:8px;top:537px;width:12.5px;height:12.5px;background:#fff;border:1px solid #CFCFCF;"></div>
<div class="t" style="left:33px;top:522px;font-size:10.5px;line-height:10.5px;font-weight:bold;color:#333;">Dowód</div>
<div class="t" style="left:33px;top:538px;font-size:10.5px;line-height:10.5px;font-weight:bold;color:#333;">Rok</div>
<div class="t" style="left:149px;top:538px;font-size:10.5px;line-height:10.5px;font-weight:bold;color:#333;">RD</div>
<div class="t" style="left:265px;top:538px;font-size:10.5px;line-height:10.5px;font-weight:bold;color:#333;">Mag</div>
<div class="t" style="left:380px;top:538px;font-size:10.5px;line-height:10.5px;font-weight:bold;color:#333;">ND</div>
<div class="t" style="left:496px;top:538px;font-size:10.5px;line-height:10.5px;font-weight:bold;color:#333;">Numer</div>
<div class="t" style="left:612px;top:538px;font-size:10.5px;line-height:10.5px;font-weight:bold;color:#333;">Data</div>
<div class="t" style="left:728px;top:538px;font-size:10.5px;line-height:10.5px;font-weight:bold;color:#333;">Status</div>
<div class="t" style="left:844px;top:522px;font-size:10.5px;line-height:10.5px;font-weight:bold;color:#333;">Przelew</div>
<div class="t" style="left:844px;top:538px;width:57px;overflow:hidden;font-size:10.5px;line-height:10.5px;font-weight:bold;color:#333;">Data zlecen</div>
<svg style="position:absolute;left:901px;top:536px;" width="16" height="15" viewBox="0 0 16 15"><line x1="8.2" y1="3" x2="8.2" y2="11" stroke="#3DAA6E" stroke-width="1.6"/><polyline points="4.4,7.4 8.2,11.2 12,7.4" fill="none" stroke="#3DAA6E" stroke-width="1.6"/></svg>
<div class="t" style="left:922px;top:538px;font-size:10.5px;line-height:10.5px;font-weight:bold;color:#333;">Kwota</div>
<svg style="position:absolute;left:1011px;top:528px;" width="12" height="14" viewBox="0 0 12 14"><polyline points="8.4,2.4 3.6,7 8.4,11.6" fill="none" stroke="#2E6FAA" stroke-width="1.5"/></svg>
<div style="left:1px;top:553px;width:1023px;height:20.5px;background:#fff;border-bottom:1px solid #DFE6EB;"></div>
<div style="left:28px;top:553px;width:1px;height:20px;background:#DCDCDC;"></div>
<div style="left:9px;top:556.5px;width:12.5px;height:12.5px;background:#fff;border:1px solid #CFCFCF;"></div>
<div style="left:28.5px;top:552.4px;width:115.5px;height:20.6px;border:3px solid #1A85C6;"></div>
<div class="t" style="left:612px;top:558px;font-size:11px;line-height:11px;font-weight:normal;color:#333;">2020-05-07</div>
<div class="t" style="left:844px;top:558px;font-size:11px;line-height:11px;font-weight:normal;color:#333;">2020-05-07</div>
<div class="t" style="left:692.6px;width:300px;text-align:right;top:558px;font-size:11px;line-height:11px;font-weight:normal;color:#333;">6 150,00</div>
</div></body></html>
